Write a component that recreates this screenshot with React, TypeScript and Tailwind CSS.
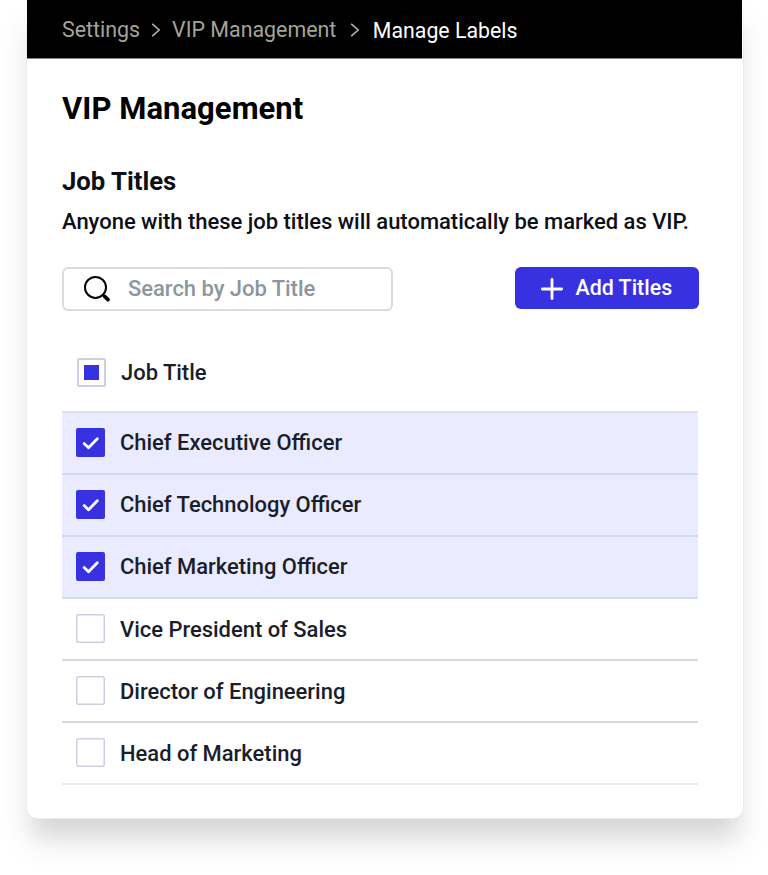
import React from "react";

const rows = [
  { title: "Chief Executive Officer", checked: true },
  { title: "Chief Technology Officer", checked: true },
  { title: "Chief Marketing Officer", checked: true },
  { title: "Vice President of Sales", checked: false },
  { title: "Director of Engineering", checked: false },
  { title: "Head of Marketing", checked: false },
];

function Chevron({ className }: { className: string }) {
  return (
    <svg viewBox="0 0 10 14" className={`h-[14px] w-[10px] shrink-0 ${className}`} fill="none" stroke="#b3b1aa" strokeWidth="1.6">
      <path d="M1.2 0.8 L8.2 7 L1.2 13.2" />
    </svg>
  );
}

function Checkbox({ checked }: { checked: boolean }) {
  return checked ? (
    <span className="mb-[2px] flex size-[29px] items-center justify-center rounded-[2px] bg-[#3831e0]">
      <svg viewBox="0 0 29 29" className="size-[29px]" fill="none" stroke="white" strokeWidth="2.8" strokeLinecap="round" strokeLinejoin="round">
        <path d="M8.1 15.6 L12.5 19.8 L21.3 10.8" />
      </svg>
    </span>
  ) : (
    <span className="mb-px size-[29px] rounded-[2px] border-[1.5px] border-[#cbcfdf] bg-white shadow-[inset_0_0_0_0.5px_#cbcfdf]" />
  );
}

export default function App() {
  return (
    <div className="h-[875px] w-[768px] overflow-hidden bg-white pl-[27px] font-['Roboto',sans-serif]">
      <div className="h-[818px] w-[716px] rounded-b-[10px] bg-white shadow-[0_1px_0_0_#ebebec,0_0_0_1px_rgba(0,0,0,0.02),0_25px_20px_-8px_rgba(20,20,30,0.09),0_25px_32px_0_rgba(20,20,30,0.09)]">
        <header className="mr-[0.7px] ml-[0.3px] flex h-[58px] items-center bg-black pl-[34.7px] text-[21.4px] leading-[26px] text-[#a5a39b] shadow-[0_1px_0_0_#808080]">
          <span className="mt-[2px]">Settings</span>
          <Chevron className="mt-[2.5px] ml-[10.5px]" />
          <span className="mt-[2px] ml-[11.5px]">VIP Management</span>
          <Chevron className="mt-[2.5px] ml-[13.5px]" />
          <span className="mt-[4px] ml-[13px] text-[21.3px] text-white">Manage Labels</span>
        </header>
        <main className="pr-[45px] pl-[35px] text-[#0d0f17]">
          <h1 className="pt-[32px] text-[31px] leading-[38px] font-bold tracking-[0.05px] text-black">VIP Management</h1>
          <h2 className="mt-[37px] text-[25.7px] leading-[32px] font-bold">Job Titles</h2>
          <p className="mt-[11px] text-[22px] leading-[28px] font-medium tracking-[-0.02px] whitespace-nowrap">
            Anyone with these job titles will automatically be marked as VIP.
          </p>
          <div className="mt-[31px] flex items-start justify-between">
            <div className="flex h-[44px] w-[331px] items-center rounded-[6px] border-2 border-[#d5dde2] pl-[19px]">
              <svg viewBox="0 0 28 28" className="size-[28px]" fill="none" stroke="black" strokeLinecap="round">
                <circle cx="12.5" cy="12.4" r="10.5" strokeWidth="2" />
                <path d="M20 20 L21.5 21.5" strokeWidth="2" />
                <path d="M21.8 21.6 L25 24.6" strokeWidth="3.8" />
              </svg>
              <span className="ml-[17px] text-[22px] leading-[28px] font-medium tracking-[-0.04px] text-[#8b969f]">Search by Job Title</span>
            </div>
            <button className="-mr-[0.6px] flex h-[42px] w-[184.1px] items-center rounded-[6px] bg-[#3831e0] pl-[26px] text-white">
              <svg viewBox="0 0 22 22" className="mt-px size-[22px]" fill="none" stroke="white" strokeWidth="2.8" strokeLinecap="round">
                <path d="M11 1.4 V20.6 M1.4 11 H20.6" />
              </svg>
              <span className="ml-[13px] text-[21.4px] leading-[28px] font-medium">Add Titles</span>
            </button>
          </div>
          <div className="mt-[24px] flex h-[76px] items-center pl-[15px] text-[#1a1e2b]">
            <span className="mb-px flex size-[29px] items-center justify-center rounded-[2px] border-2 border-[#cdd1df]">
              <span className="size-[15px] bg-[#3831e0]" />
            </span>
            <span className="ml-[15px] text-[21.95px] leading-[28px] font-medium">Job Title</span>
          </div>
          <ul className="border-t-2 border-[#dde3ec] text-[#1a1e2b]">
            {rows.map((row) => (
              <li
                key={row.title}
                className={`flex h-[62px] items-center border-b-2 border-[#d3dce2] pl-[14px] last:border-[#e6ebef] ${row.checked ? "bg-[#eaebfe]" : ""}`}
              >
                <Checkbox checked={row.checked} />
                <span className={`ml-[15px] text-[21.95px] leading-[28px] font-medium ${row.checked ? "" : "mt-[2px]"}`}>{row.title}</span>
              </li>
            ))}
          </ul>
        </main>
      </div>
    </div>
  );
}
